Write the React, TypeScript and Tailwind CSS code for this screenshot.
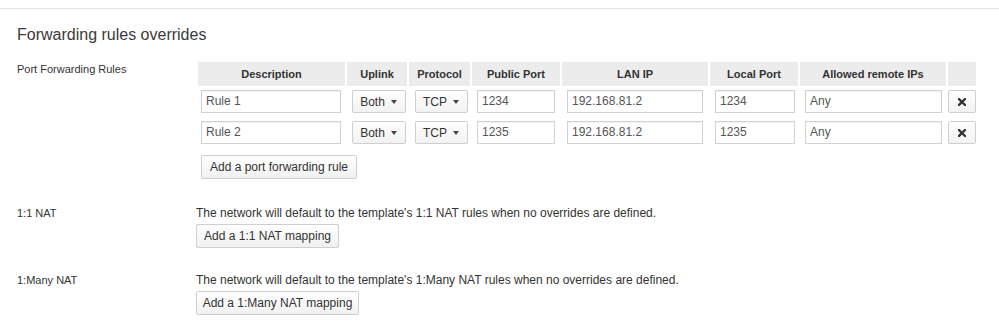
import React from 'react';

const rules = [
  { desc: 'Rule 1', uplink: 'Both', proto: 'TCP', pub: '1234', lan: '192.168.81.2', local: '1234', remote: 'Any' },
  { desc: 'Rule 2', uplink: 'Both', proto: 'TCP', pub: '1235', lan: '192.168.81.2', local: '1235', remote: 'Any' },
];

const headers = ['Description', 'Uplink', 'Protocol', 'Public Port', 'LAN IP', 'Local Port', 'Allowed remote IPs', ''];

const Field: React.FC<{ value: string }> = ({ value }) => (
  <div className="h-[23px] w-full border border-[#d2d2d2] bg-white px-[4px] text-[12px] leading-[21px] text-[#555] shadow-[inset_0_1px_1px_rgba(0,0,0,0.06)]">
    {value}
  </div>
);

const Dropdown: React.FC<{ label: string; w: string }> = ({ label, w }) => (
  <div className={`${w} flex h-[23px] items-center justify-center gap-[6px] rounded-[2px] border border-[#cfcfcf] bg-gradient-to-b from-white to-[#f2f2f2] text-[12px] text-[#333]`}>
    <span>{label}</span>
    <span className="mt-[1px] h-0 w-0 border-l-[3px] border-r-[3px] border-t-[4px] border-l-transparent border-r-transparent border-t-[#444]" />
  </div>
);

const Button: React.FC<{ children: React.ReactNode; className?: string }> = ({ children, className }) => (
  <div className={`flex h-[24px] items-center justify-center rounded-[2px] border border-[#cfcfcf] bg-gradient-to-b from-white to-[#f1f1f1] text-[12px] text-[#333] ${className ?? ''}`}>
    {children}
  </div>
);

const RemoveButton = () => (
  <div className="flex h-[23px] w-full items-center justify-center rounded-[2px] border border-[#cfcfcf] bg-gradient-to-b from-white to-[#f2f2f2]">
    <svg width="8" height="8" viewBox="0 0 8 8">
      <path d="M1 1 L7 7 M7 1 L1 7" stroke="#333" strokeWidth="2.3" strokeLinecap="square" />
    </svg>
  </div>
);

export default function App() {
  return (
    <div className="h-[336px] w-[999px] overflow-hidden bg-white font-['Liberation_Sans',Arial,sans-serif] text-[11px] text-[#333]">
      <div className="pt-[8px]">
        <div className="h-px bg-[#e4e4e4]" />
      </div>

      <h2 className="mt-[16px] pl-[17px] text-[16px] leading-[20px] text-[#3a3a3a]">Forwarding rules overrides</h2>

      {/* port forwarding */}
      <div className="mt-[17px] flex">
        <div className="w-[196px] shrink-0 pl-[17px] leading-[14px]">Port Forwarding Rules</div>
        <div className="ml-[2px]">
          <div className="grid grid-cols-[147px_60px_61px_88px_146px_88px_146px_28px] gap-x-[2px]">
            {headers.map((h, i) => (
              <div key={i} className="flex h-[24px] items-center justify-center bg-[#ececec] font-bold text-[#333]">
                {h}
              </div>
            ))}
            {rules.map((r) => (
              <React.Fragment key={r.desc}>
                <div className="py-[4px] pl-[3px] pr-[4px]"><Field value={r.desc} /></div>
                <div className="flex justify-center py-[4px] pl-[3px]"><Dropdown label={r.uplink} w="w-[54px]" /></div>
                <div className="flex justify-center py-[4px] pl-[3px]"><Dropdown label={r.proto} w="w-[53px]" /></div>
                <div className="py-[4px] px-[5px]"><Field value={r.pub} /></div>
                <div className="py-[4px] px-[5px]"><Field value={r.lan} /></div>
                <div className="py-[4px] pl-[5px] pr-[3px]"><Field value={r.local} /></div>
                <div className="py-[4px] pl-[5px] pr-[4px]"><Field value={r.remote} /></div>
                <div className="py-[4px]"><RemoveButton /></div>
              </React.Fragment>
            ))}
          </div>
          <Button className="ml-[3px] mt-[7px] w-[156px]">Add a port forwarding rule</Button>
        </div>
      </div>

      {/* 1:1 NAT */}
      <div className="mt-[27px] flex">
        <div className="w-[196px] shrink-0 pl-[17px] leading-[14px]">1:1 NAT</div>
        <div>
          <div className="text-[12px] leading-[14px]">The network will default to the template's 1:1 NAT rules when no overrides are defined.</div>
          <Button className="mt-[4px] w-[143px]">Add a 1:1 NAT mapping</Button>
        </div>
      </div>

      {/* 1:Many NAT */}
      <div className="mt-[25px] flex">
        <div className="w-[196px] shrink-0 pl-[17px] leading-[14px]">1:Many NAT</div>
        <div>
          <div className="text-[12px] leading-[14px]">The network will default to the template's 1:Many NAT rules when no overrides are defined.</div>
          <Button className="mt-[4px] w-[163px]">Add a 1:Many NAT mapping</Button>
        </div>
      </div>
    </div>
  );
}
